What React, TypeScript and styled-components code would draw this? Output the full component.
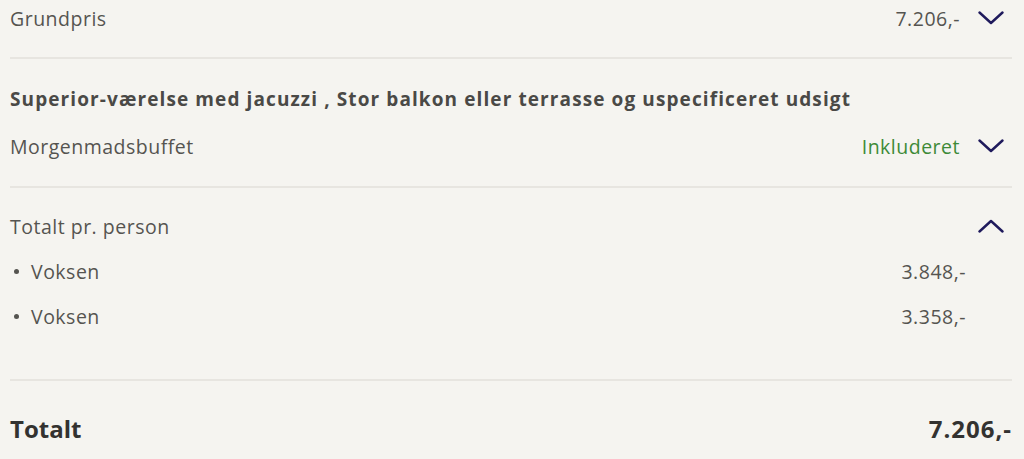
import styled, { createGlobalStyle } from 'styled-components';

const GlobalStyle = createGlobalStyle`
  body {
    margin: 0;
    background: #f5f4f0;
    font-family: "Open Sans", Lato, sans-serif;
    color: #555450;
  }
`;

const Chevron = ({ up }: { up?: boolean }) => (
  <SChevron width="26" height="14" viewBox="0 0 26 14" $up={up}>
    <path d="M1.5 1.5 L13 12 L24.5 1.5" fill="none" stroke="#1f1a5c" strokeWidth="2.4" strokeLinecap="round" strokeLinejoin="round" />
  </SChevron>
);

const persons = [
  { label: 'Voksen', price: '3.848,-' },
  { label: 'Voksen', price: '3.358,-' },
];

export default function App() {
  return (
    <>
      <GlobalStyle />
      <SContainer>
        <SSection $pt={0} $pb={19}>
          <SRow>
            <SLabel>Grundpris</SLabel>
            <SValue>
              7.206,-
              <Chevron />
            </SValue>
          </SRow>
        </SSection>

        <SSection $pt={27} $pb={20}>
          <STitle>Superior-værelse med jacuzzi , Stor balkon eller terrasse og uspecificeret udsigt</STitle>
          <SRow>
            <SLabel>Morgenmadsbuffet</SLabel>
            <SValue $green>
              Inkluderet
              <Chevron />
            </SValue>
          </SRow>
        </SSection>

        <SSection $pt={18} $pb={43}>
          <SRow>
            <SLabel>Totalt pr. person</SLabel>
            <SValue>
              <Chevron up />
            </SValue>
          </SRow>
          <SList>
            {persons.map((p, i) => (
              <SListItem key={i}>
                <SBullet>{p.label}</SBullet>
                <span>{p.price}</span>
              </SListItem>
            ))}
          </SList>
        </SSection>

        <STotal>
          <span>Totalt</span>
          <STotalPrice>7.206,-</STotalPrice>
        </STotal>
      </SContainer>
    </>
  );
}

const SContainer = styled.div`
  width: 1002px;
  margin-left: 10px;
  margin-top: -2px;
`;

const SSection = styled.div<{ $pt: number; $pb: number }>`
  padding: ${(p) => p.$pt}px 0 ${(p) => p.$pb}px;
  border-bottom: 2px solid #e7e5e0;
`;

const SRow = styled.div`
  display: flex;
  justify-content: space-between;
  align-items: center;
  height: 40px;
  font-size: 19.5px;
  letter-spacing: 0.5px;
`;

const SLabel = styled.div``;

const SValue = styled.div<{ $green?: boolean }>`
  display: flex;
  align-items: center;
  gap: 18px;
  padding-right: 8px;
  color: ${(p) => (p.$green ? '#3d8a38' : '#555450')};
`;

const SChevron = styled.svg<{ $up?: boolean }>`
  display: block;
  transform: ${(p) => (p.$up ? 'rotate(180deg)' : 'none')};
`;

const STitle = styled.div`
  font-size: 19px;
  font-weight: 700;
  letter-spacing: 1.1px;
  color: #4a4946;
  margin-bottom: 14px;
  white-space: nowrap;
`;

const SList = styled.ul`
  list-style: none;
  margin: 5px 0 0;
  padding: 0;
  display: flex;
  flex-direction: column;
  gap: 5px;
`;

const SListItem = styled.li`
  display: flex;
  justify-content: space-between;
  align-items: center;
  height: 40px;
  font-size: 19.5px;
  letter-spacing: 0.5px;
  padding-right: 46px;
`;

const SBullet = styled.span`
  display: flex;
  align-items: center;
  &::before {
    content: '';
    width: 5px;
    height: 5px;
    border-radius: 50%;
    background: #555450;
    margin: 0 12px 0 4px;
  }
`;

const STotal = styled.div`
  display: flex;
  justify-content: space-between;
  align-items: center;
  padding-top: 27px;
  height: 40px;
  font-size: 24px;
  font-weight: 700;
  color: #333230;
`;

const STotalPrice = styled.span`
  letter-spacing: 1px;
`;
